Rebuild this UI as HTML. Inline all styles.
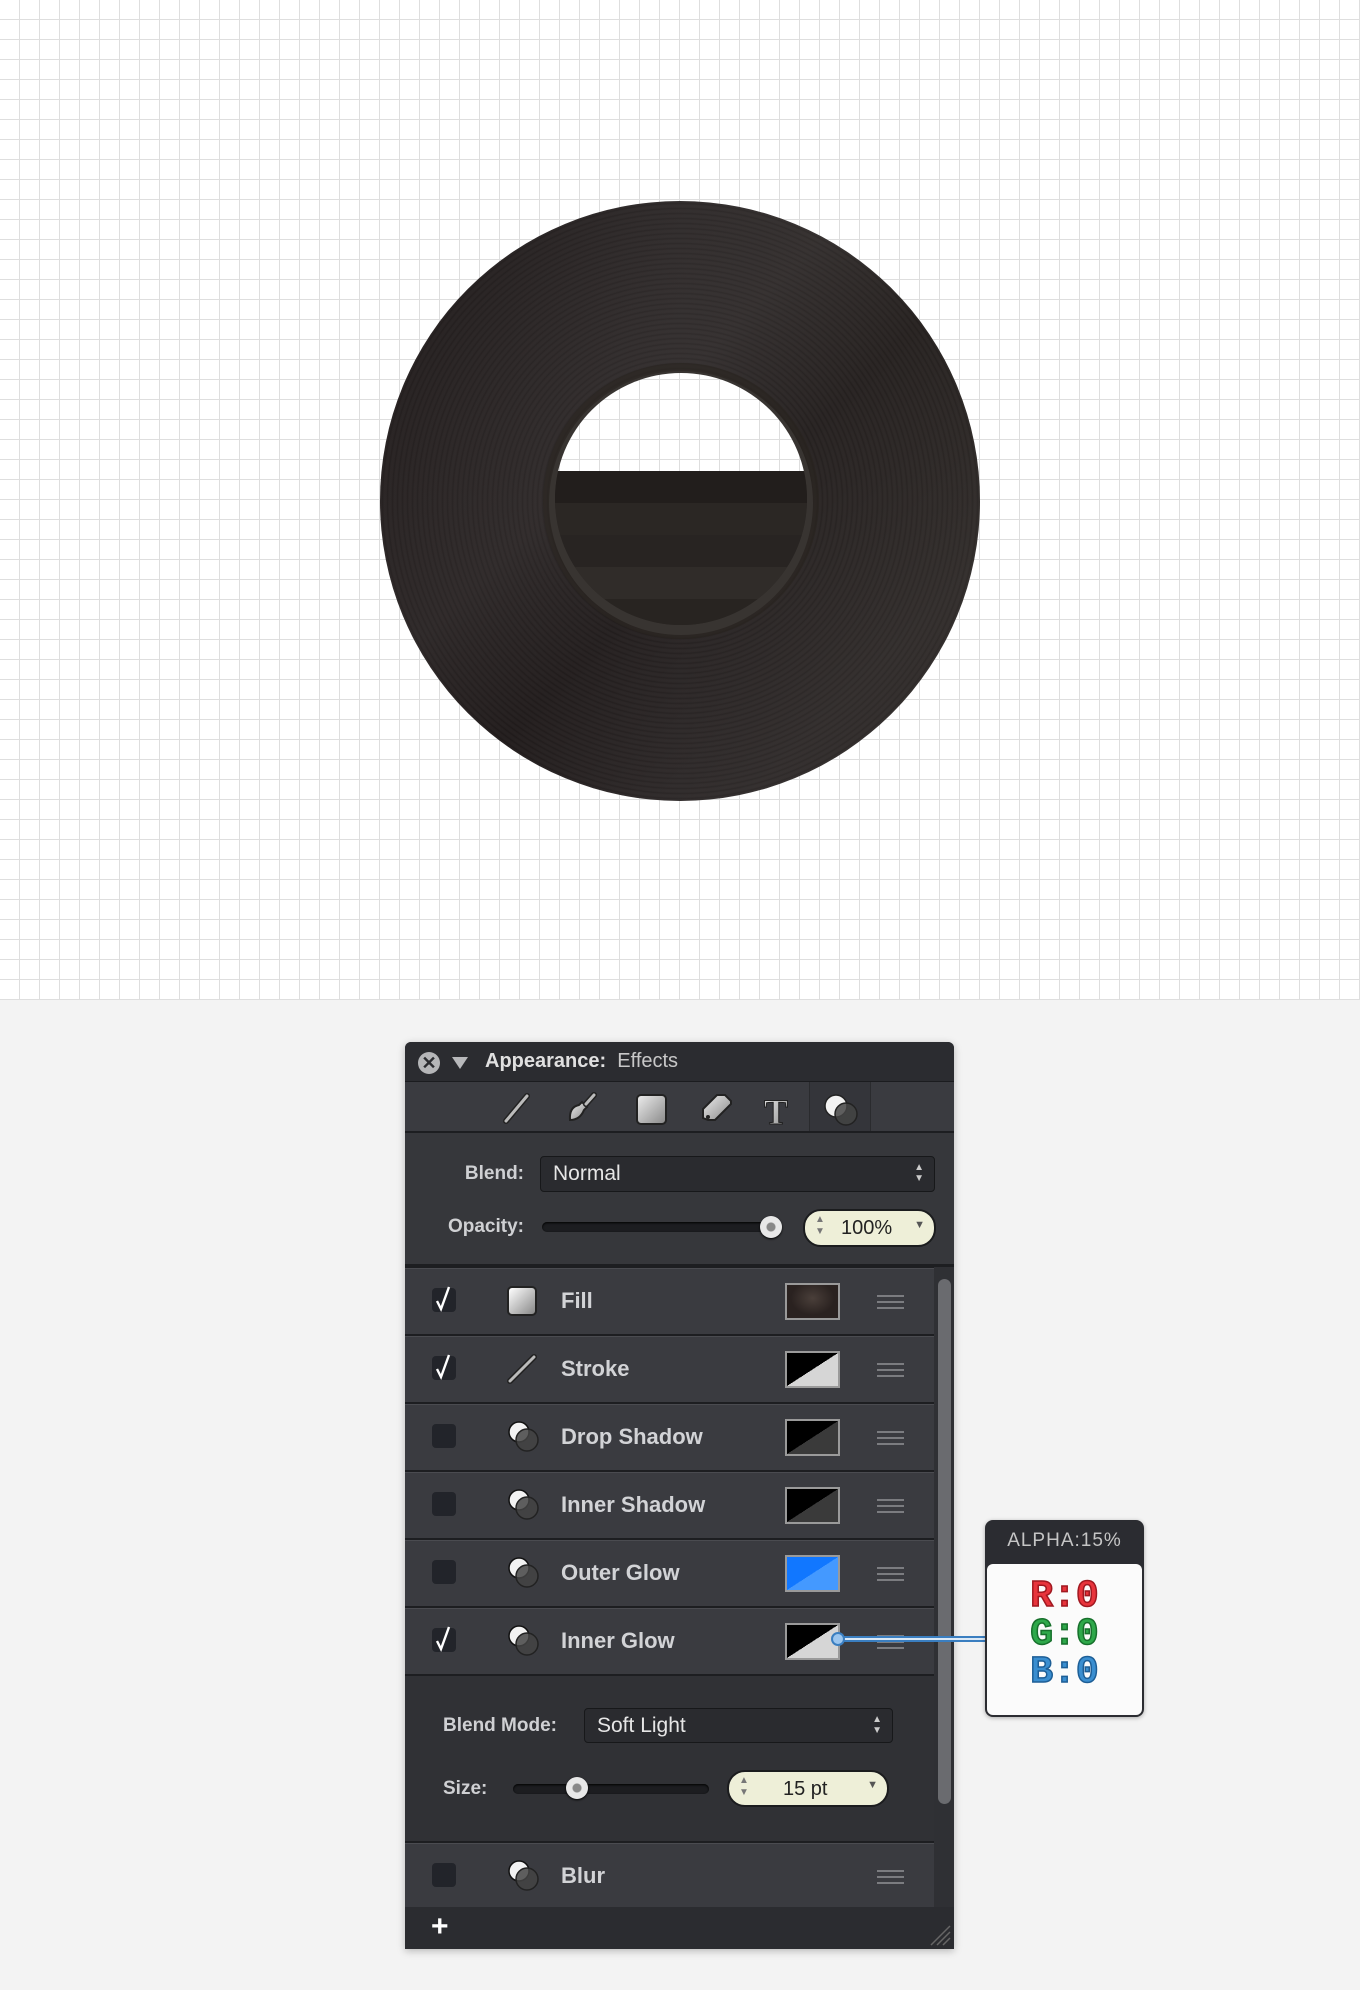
<!DOCTYPE html>
<html><head><meta charset="utf-8"><style>
*{box-sizing:border-box;margin:0;padding:0}
body{width:1360px;height:1990px;background:#f3f3f3;position:relative;overflow:hidden;font-family:"Liberation Sans",sans-serif}
.abs{position:absolute}
.panel{left:405px;top:1042px;width:549px;height:907px;background:#36373b;border-radius:6px 6px 0 0;box-shadow:0 2px 8px rgba(0,0,0,.25);overflow:hidden}
.title{left:0;top:0;width:549px;height:40px;background:#2b2c30;border-bottom:1px solid #1b1c1f}
.tb{left:0;top:40px;width:549px;height:51px;background:#3a3b40;border-bottom:2px solid #1d1e21}
.lbl{color:#cfd0d3;font-weight:bold;font-size:19px}
.sel{background:#2a2b2f;border:1px solid #17181a;border-radius:4px;color:#e6e6e6;font-size:21px}
.track{height:10px;border-radius:5px;background:#1c1d20;box-shadow:inset 0 1px 2px #000}
.knob{width:22px;height:22px;border-radius:50%;background:radial-gradient(circle,#888 0 4px,#e8e8e8 5px);box-shadow:0 1px 2px #000}
.pill{background:#eeefd8;border-radius:18px;border:2px solid #1b1c1e;color:#222;font-size:20px}
.row{left:0;width:529px;height:68px;background:#3a3b40;border-top:2px solid #1d1e21;box-shadow:inset 0 1px 0 #4a4b50}
.cb{left:27px;width:24px;height:24px;border-radius:4px;background:#22242a}
.sw{left:380px;width:55px;height:37px;border:2px solid #9a9a9a}
.hd{left:472px;width:27px;height:14px;border-top:2px solid #7b7c80;border-bottom:2px solid #7b7c80}
.hd:after{content:"";position:absolute;left:0;right:0;top:4px;border-top:2px solid #7b7c80}
.name{left:156px;color:#d2d3d6;font-weight:bold;font-size:22px}
</style></head><body>
<svg class="abs" style="left:0;top:0" width="1360" height="1000">
<defs>
<pattern id="g" width="20" height="20" patternUnits="userSpaceOnUse"><rect width="20" height="20" fill="#fff"/><rect x="19" width="1" height="20" fill="#dedede"/><rect y="19" width="20" height="1" fill="#dedede"/></pattern>
<linearGradient id="base" x1="0" y1="0" x2="1" y2="0"><stop offset="0" stop-color="#1d1717"/><stop offset=".5" stop-color="#252020"/><stop offset="1" stop-color="#26211f"/></linearGradient>
<radialGradient id="gr" cx="680" cy="501" r="5" gradientUnits="userSpaceOnUse" spreadMethod="repeat"><stop offset="0" stop-color="#fff" stop-opacity=".025"/><stop offset=".5" stop-color="#000" stop-opacity=".07"/><stop offset="1" stop-color="#fff" stop-opacity=".025"/></radialGradient>
<linearGradient id="sh" x1="0" y1="0" x2="1" y2="1"><stop offset="0" stop-color="#000" stop-opacity=".1"/><stop offset=".4" stop-color="#fff" stop-opacity=".06"/><stop offset=".55" stop-color="#fff" stop-opacity=".0"/><stop offset=".8" stop-color="#fff" stop-opacity=".05"/><stop offset="1" stop-color="#000" stop-opacity=".1"/></linearGradient>
<clipPath id="hc"><circle cx="681" cy="499" r="126"/></clipPath>
</defs>
<rect width="1360" height="1000" fill="url(#g)"/>
<circle cx="680" cy="501" r="300" fill="url(#base)"/>
<circle cx="680" cy="501" r="300" fill="url(#gr)"/>
<circle cx="680" cy="501" r="300" fill="url(#sh)"/>
<circle cx="681" cy="501" r="138" fill="#29241f" fill-opacity=".6"/>
<circle cx="681" cy="503" r="132" fill="#383431"/>
<g clip-path="url(#hc)">
<rect x="540" y="370" width="290" height="260" fill="#2a2624"/>
<rect x="540" y="471" width="290" height="32" fill="#221e1c"/>
<rect x="540" y="503" width="290" height="32" fill="#2b2724"/>
<rect x="540" y="535" width="290" height="32" fill="#282422"/>
<rect x="540" y="567" width="290" height="32" fill="#302c29"/>
<rect x="540" y="599" width="290" height="40" fill="#282421"/>
<rect x="540" y="360" width="290" height="111" fill="url(#g)"/>
</g>
</svg>

<div class="abs panel">
 <div class="abs title">
  <div class="abs" style="left:13px;top:10px;width:22px;height:22px;border-radius:50%;background:#b5b6b8;color:#2b2c30;font-size:18px;font-weight:bold;line-height:22px;text-align:center">✕</div>
  <div class="abs" style="left:47px;top:15px;width:0;height:0;border-left:8px solid transparent;border-right:8px solid transparent;border-top:12px solid #b8b9bb"></div>
  <div class="abs" style="left:80px;top:8px;font-size:20px;color:#e0e0e0"><b>Appearance:</b>&nbsp; <span style="color:#c8c8c8">Effects</span></div>
 </div>
 <div class="abs tb">
  <div class="abs" style="left:404px;top:0;width:62px;height:49px;background:#34353a;box-shadow:inset 1px 0 0 #2a2b2e,inset -1px 0 0 #2a2b2e"></div>
  <svg class="abs" style="left:0;top:0" width="549" height="49">
   <defs><linearGradient id="ig" x1="0" y1="0" x2="1" y2="1"><stop offset="0" stop-color="#eee"/><stop offset="1" stop-color="#888"/></linearGradient></defs>
   <line x1="101" y1="39" x2="122" y2="14" stroke="#222" stroke-width="6" stroke-linecap="round"/><line x1="101" y1="39" x2="122" y2="14" stroke="#bbb" stroke-width="3" stroke-linecap="round"/>
   <path d="M165 38 q10 0 14-10 l3-3 l-5-5 l-3 3 q-10 2-9 15z" stroke="#222" stroke-width="2" fill="url(#ig)"/>
   <line x1="181" y1="22" x2="189" y2="13" stroke="#222" stroke-width="6" stroke-linecap="round"/>
   <line x1="181" y1="22" x2="189" y2="13" stroke="#bbb" stroke-width="3" stroke-linecap="round"/>
   <rect x="232" y="13" width="29" height="29" rx="4" fill="url(#ig)" stroke="#222" stroke-width="2"/>
   <path d="M298 36 v-9 l14-14 h8 l6 6 v3 l-16 16 h-7 z" fill="url(#ig)" stroke="#222" stroke-width="2"/>
   <circle cx="303" cy="35" r="2" fill="#222"/>
   <text x="371" y="42" font-family="Liberation Serif" font-weight="bold" font-size="36" fill="url(#ig)" stroke="#222" stroke-width="1" text-anchor="middle">T</text>
   <circle cx="431" cy="24" r="11" fill="#f2f2f2" stroke="#222" stroke-width="1.5"/>
   <circle cx="441" cy="32" r="11" fill="#444" fill-opacity=".85" stroke="#222" stroke-width="1.5"/>
  </svg>
 </div>
 <div class="abs lbl" style="left:0;width:119px;text-align:right;top:121px">Blend:</div>
 <div class="abs sel" style="left:135px;top:114px;width:395px;height:36px;padding:5px 0 0 12px">Normal<span style="position:absolute;right:10px;top:5px;font-size:10px;line-height:11px;color:#ccc">▲<br>▼</span></div>
 <div class="abs lbl" style="left:0;width:119px;text-align:right;top:174px">Opacity:</div>
 <div class="abs track" style="left:137px;top:180px;width:236px"></div>
 <div class="abs knob" style="left:355px;top:174px"></div>
 <div class="abs pill" style="left:398px;top:167px;width:133px;height:38px;padding:6px 0 0 36px">100%<span style="position:absolute;left:10px;top:3px;font-size:10px;line-height:12px;color:#777">▲<br>▼</span><span style="position:absolute;right:9px;top:8px;font-size:11px;color:#555">▼</span></div>
 <div class="abs" style="left:0;top:222px;width:549px;height:3px;background:#1d1e21"></div>

 <div class="abs" style="left:529px;top:225px;width:20px;height:640px;background:#2f3034"></div>
 <div class="abs" style="left:533px;top:237px;width:13px;height:525px;border-radius:7px;background:#6a6b6f"></div>

 <div class="abs row" style="top:224px">
  <div class="abs cb" style="top:20px"><svg width="26" height="26" style="overflow:visible"><path d="M5 13 l4 8 l8-22" stroke="#fff" stroke-width="2.4" fill="none"/></svg></div>
  <div class="abs" style="left:102px;top:18px;width:30px;height:30px;border-radius:5px;background:linear-gradient(135deg,#fff,#888);border:2px solid #222"></div>
  <div class="abs name" style="top:20px">Fill</div>
  <div class="abs sw" style="top:15px;background:radial-gradient(ellipse at 50% 40%,#4a3f3a,#2a2220 60%)"></div>
  <div class="abs hd" style="top:27px"></div>
 </div>
 <div class="abs row" style="top:292px">
  <div class="abs cb" style="top:20px"><svg width="26" height="26" style="overflow:visible"><path d="M5 13 l4 8 l8-22" stroke="#fff" stroke-width="2.4" fill="none"/></svg></div>
  <svg class="abs" style="left:100px;top:16px" width="34" height="34"><line x1="5" y1="29" x2="29" y2="5" stroke="#222" stroke-width="6" stroke-linecap="round"/><line x1="5" y1="29" x2="29" y2="5" stroke="#bbb" stroke-width="3" stroke-linecap="round"/></svg>
  <div class="abs name" style="top:20px">Stroke</div>
  <div class="abs sw" style="top:15px;background:linear-gradient(to bottom right,#000 50%,#d6d6d6 50%)"></div>
  <div class="abs hd" style="top:27px"></div>
 </div>
 <div class="abs row" style="top:360px">
  <div class="abs cb" style="top:20px"></div>
  <svg class="abs" style="left:100px;top:14px" width="40" height="40"><circle cx="14" cy="14" r="10" fill="#f2f2f2" stroke="#111" stroke-width="1.5"/><circle cx="22" cy="22" r="11" fill="#444" fill-opacity=".85" stroke="#222" stroke-width="1.5"/></svg>
  <div class="abs name" style="top:20px">Drop Shadow</div>
  <div class="abs sw" style="top:15px;background:linear-gradient(to bottom right,#000 50%,#3a3a3a 50%)"></div>
  <div class="abs hd" style="top:27px"></div>
 </div>
 <div class="abs row" style="top:428px">
  <div class="abs cb" style="top:20px"></div>
  <svg class="abs" style="left:100px;top:14px" width="40" height="40"><circle cx="14" cy="14" r="10" fill="#f2f2f2" stroke="#111" stroke-width="1.5"/><circle cx="22" cy="22" r="11" fill="#444" fill-opacity=".85" stroke="#222" stroke-width="1.5"/></svg>
  <div class="abs name" style="top:20px">Inner Shadow</div>
  <div class="abs sw" style="top:15px;background:linear-gradient(to bottom right,#000 50%,#3a3a3a 50%)"></div>
  <div class="abs hd" style="top:27px"></div>
 </div>
 <div class="abs row" style="top:496px">
  <div class="abs cb" style="top:20px"></div>
  <svg class="abs" style="left:100px;top:14px" width="40" height="40"><circle cx="14" cy="14" r="10" fill="#f2f2f2" stroke="#111" stroke-width="1.5"/><circle cx="22" cy="22" r="11" fill="#444" fill-opacity=".85" stroke="#222" stroke-width="1.5"/></svg>
  <div class="abs name" style="top:20px">Outer Glow</div>
  <div class="abs sw" style="top:15px;background:linear-gradient(to bottom right,#1177ff 50%,#4499ff 50%)"></div>
  <div class="abs hd" style="top:27px"></div>
 </div>
 <div class="abs row" style="top:564px">
  <div class="abs cb" style="top:20px"><svg width="26" height="26" style="overflow:visible"><path d="M5 13 l4 8 l8-22" stroke="#fff" stroke-width="2.4" fill="none"/></svg></div>
  <svg class="abs" style="left:100px;top:14px" width="40" height="40"><circle cx="14" cy="14" r="10" fill="#f2f2f2" stroke="#111" stroke-width="1.5"/><circle cx="22" cy="22" r="11" fill="#444" fill-opacity=".85" stroke="#222" stroke-width="1.5"/></svg>
  <div class="abs name" style="top:20px">Inner Glow</div>
  <div class="abs sw" style="top:15px;background:linear-gradient(to bottom right,#000 50%,#d6d6d6 50%)"></div>
  <div class="abs hd" style="top:27px"></div>
 </div>
 <div class="abs" style="left:0;top:632px;width:529px;height:167px;background:#303135;border-top:2px solid #1d1e21"></div>
 <div class="abs lbl" style="left:38px;top:673px">Blend Mode:</div>
 <div class="abs sel" style="left:179px;top:666px;width:309px;height:35px;padding:5px 0 0 12px">Soft Light<span style="position:absolute;right:10px;top:5px;font-size:10px;line-height:11px;color:#ccc">▲<br>▼</span></div>
 <div class="abs lbl" style="left:38px;top:736px">Size:</div>
 <div class="abs track" style="left:108px;top:742px;width:196px"></div>
 <div class="abs knob" style="left:161px;top:735px"></div>
 <div class="abs pill" style="left:322px;top:728px;width:162px;height:37px;padding:6px 0 0 54px">15 pt<span style="position:absolute;left:10px;top:3px;font-size:10px;line-height:12px;color:#777">▲<br>▼</span><span style="position:absolute;right:9px;top:7px;font-size:11px;color:#555">▼</span></div>
 <div class="abs row" style="top:799px;height:66px">
  <div class="abs cb" style="top:20px"></div>
  <svg class="abs" style="left:100px;top:14px" width="40" height="40"><circle cx="14" cy="14" r="10" fill="#f2f2f2" stroke="#111" stroke-width="1.5"/><circle cx="22" cy="22" r="11" fill="#444" fill-opacity=".85" stroke="#222" stroke-width="1.5"/></svg>
  <div class="abs name" style="top:20px">Blur</div>
  <div class="abs hd" style="top:27px"></div>
 </div>
 <div class="abs" style="left:0;top:865px;width:549px;height:42px;background:#2b2c30"></div>
 <div class="abs" style="left:26px;top:868px;color:#fff;font-size:30px;font-weight:bold">+</div>
 <svg class="abs" style="left:524px;top:882px" width="22" height="22"><path d="M2 21 L21 2 M8 21 L21 8 M14 21 L21 14" stroke="#666" stroke-width="1.5"/></svg>
</div>

<div class="abs" style="left:838px;top:1636px;width:150px;height:6px;background:#dbe9f7;border-top:2px solid #3a7ec0;border-bottom:2px solid #3a7ec0"></div>
<div class="abs" style="left:831px;top:1632px;width:14px;height:14px;border-radius:50%;background:#9cc6ef;border:2px solid #3a7ec0"></div>

<div class="abs" style="left:985px;top:1520px;width:159px;height:197px;border-radius:8px;background:#2b2c31;box-shadow:0 1px 4px rgba(0,0,0,.3)"></div>
<div class="abs" style="left:985px;top:1530px;width:159px;text-align:center;color:#c5c5c5;font-family:'Liberation Sans',sans-serif;font-size:19px;letter-spacing:1px">ALPHA:15%</div>
<div class="abs" style="left:987px;top:1564px;width:155px;height:151px;border-radius:6px;background:#fbfbfb"></div>
<div class="abs" style="left:985px;top:1578px;width:159px;text-align:center;font-family:'Liberation Mono',monospace;font-weight:bold;font-size:38px;line-height:38px">
<div style="color:#e8343c;-webkit-text-stroke:1.5px #a01820">R:0</div>
<div style="color:#2ea84a;-webkit-text-stroke:1.5px #17702c">G:0</div>
<div style="color:#3a8ed0;-webkit-text-stroke:1.5px #1d5e96">B:0</div>
</div>
</body></html>
